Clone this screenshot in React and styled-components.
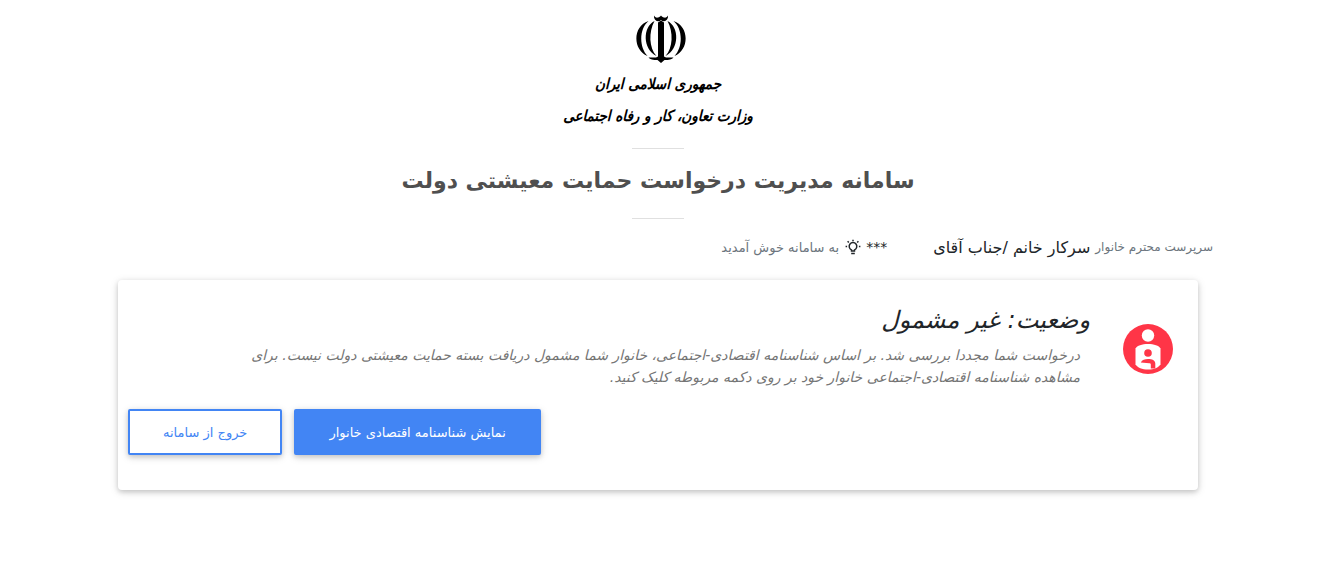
import React from "react";
import styled, { createGlobalStyle } from "styled-components";

const GlobalStyle = createGlobalStyle`
  * {
    box-sizing: border-box;
  }

  body {
    margin: 0;
    background: #fff;
    color: #212529;
    font-family: "DejaVu Sans", sans-serif;
    font-size: 12px;
  }
`;

const Page = styled.div`
  padding: 12px 23px 40px 0;
`;

const Container = styled.main`
  max-width: 1140px;
  margin: 0 auto;
  padding: 0 15px;
`;

const Header = styled.header`
  display: flex;
  flex-direction: column;
  align-items: center;
`;

const Emblem = styled.svg`
  display: block;
  width: 56px;
  height: 56px;
  margin-right: -6px;
`;

const LogoText = styled.div`
  color: #000;
  font-family: "DejaVu Sans Condensed", "DejaVu Sans", sans-serif;
  font-size: 15px;
  font-style: italic;
  font-weight: bold;
  line-height: 32px;
  white-space: nowrap;
`;

const Divider = styled.hr`
  width: 52px;
  margin: ${(props) => (props.$first ? "16px 0 0" : "0")};
  border: 0;
  border-top: 1px solid #e0e0e0;
`;

const Title = styled.h1`
  margin: 0;
  padding: 12px 0 17px;
  color: #4f4f4f;
  font-size: 22px;
  font-weight: bold;
  line-height: 40px;
  text-align: center;
`;

const Welcome = styled.div`
  display: flex;
  align-items: center;
  height: 28px;
  margin-top: 14px;
  color: #6c757d;
`;

const Name = styled.span`
  margin-right: 5px;
  color: #212529;
  font-size: 16px;
`;

const Stars = styled.span`
  margin-right: 46px;
  color: #212529;
  font-size: 14px;
`;

const Greeting = styled.span`
  font-size: 13px;
`;

const Bulb = styled.svg`
  width: 16px;
  height: 16px;
  margin: 0 5px 0 6px;
`;

const Card = styled.section`
  margin: 19px 15px 0;
  padding: 20px 10px 35px;
  border-radius: 4px;
  background: #fff;
  box-shadow: 0 2px 5px rgba(0, 0, 0, 0.16), 0 2px 10px rgba(0, 0, 0, 0.12);
`;

const Status = styled.div`
  display: flex;
  align-items: flex-start;
`;

const StatusIcon = styled.svg`
  flex: none;
  width: 50px;
  height: 50px;
  margin: 24px 15px 0 33px;
`;

const StatusBody = styled.div`
  font-style: italic;
`;

const StatusTitle = styled.h2`
  margin: 0;
  font-size: 24px;
  font-weight: normal;
  line-height: 40px;
`;

const StatusText = styled.p`
  max-width: 860px;
  margin: 4px 10px 0 0;
  color: #757575;
  font-size: 14px;
  line-height: 22px;
`;

const Actions = styled.div`
  display: flex;
  justify-content: flex-end;
  gap: 12px;
  margin-top: 21px;
`;

const Button = styled.button`
  height: 46px;
  padding: 0 33px;
  border: 2px solid #4285f4;
  border-radius: 2px;
  background: ${(props) => (props.$outline ? "#fff" : "#4285f4")};
  box-shadow: 0 2px 5px rgba(0, 0, 0, 0.16), 0 2px 10px rgba(0, 0, 0, 0.12);
  color: ${(props) => (props.$outline ? "#4285f4" : "#fff")};
  font-family: inherit;
  font-size: 13px;
  cursor: pointer;
`;

const EmblemIcon = () => (
  <Emblem viewBox="0 0 56 56" aria-hidden="true">
    <path d="M21 3.500c.5 1.500 2.500 2.500 4 2 1.300-.4 2.200-1 3-2 .8 1 1.700 1.600 3 2 1.500.5 3.500-.5 4-2 .3 3-1.500 5.500-4 5.700-1.200.1-2.200-.3-3-1.200-.8.900-1.800 1.300-3 1.200-2.500-.2-4.300-2.700-4-5.700z" />
    <path d="M25 10.500l3-2 3 2v34l2 1h7.500c-1.500 2-4.500 2.500-9 2.500L28 51l-3.500-3c-4.500 0-7.500-.5-9-2.500H23l2-1z" />
    <path d="M21.500 9C9.500 15 9.500 37 23.500 44 16 36 15.500 20 21.500 9z" />
    <path d="M34.500 9C46.500 15 46.500 37 32.500 44 40 36 40.500 20 34.500 9z" />
    <path d="M15.500 9C-.5 14 -.5 38 14.500 44 6 35 6 17 15.500 9z" />
    <path d="M40.500 9C56.500 14 56.500 38 41.500 44 50 35 50 17 40.500 9z" />
  </Emblem>
);

const BulbIcon = () => (
  <Bulb
    viewBox="0 0 16 16"
    fill="none"
    stroke="#212529"
    strokeWidth="1.500"
    aria-hidden="true"
  >
    <path d="M6.500 12v-1.100a3.800 3.800 0 1 1 3 0V12z" />
    <path d="M6.200 14.500h3.600M8 .8v1.500M.6 7.500h1.500M13.900 7.500h1.500M2.600 2.300l1.200 1.200M13.400 2.300l-1.200 1.200" />
  </Bulb>
);

const FamilyIcon = () => (
  <StatusIcon viewBox="0 0 50 50" aria-hidden="true">
    <circle cx="25" cy="25" r="25" fill="#ff3547" />
    <circle cx="25" cy="11.500" r="6.200" fill="#fff" />
    <path
      fill="#fff"
      d="M12.500 24.500C14 21.500 19 20 25 20s11 1.500 12.500 4.500v16C35.500 43.500 31 45.500 25 45.500s-10.500-2-12.500-5z"
    />
    <circle cx="25" cy="29" r="3.800" fill="#ff3547" />
    <path
      fill="#ff3547"
      d="M17.800 38.500C19 35.800 22 35 25 35c4 0 7.300 1.300 7.300 4.500v5h-4.500v-4c0-.9-.6-1.300-1.500-1.300z"
    />
  </StatusIcon>
);

const App = () => {
  return (
    <Page dir='rtl' lang='fa'>
      <GlobalStyle />
      <Container>
        <Header>
          <EmblemIcon />
          <LogoText>جمهوری اسلامی ایران</LogoText>
          <LogoText>وزارت تعاون، کار و رفاه اجتماعی</LogoText>
          <Divider $first />
          <Title>سامانه مدیریت درخواست حمایت معیشتی دولت</Title>
          <Divider />
        </Header>

        <Welcome>
          <span>سرپرست محترم خانوار</span>
          <Name>سرکار خانم /جناب آقای</Name>
          <Stars>***</Stars>
          <BulbIcon />
          <Greeting>به سامانه خوش آمدید</Greeting>
        </Welcome>

        <Card>
          <Status>
            <FamilyIcon />
            <StatusBody>
              <StatusTitle>وضعیت: غیر مشمول</StatusTitle>
              <StatusText>
                درخواست شما مجددا بررسی شد. بر اساس شناسنامه اقتصادی-اجتماعی،
                خانوار شما مشمول دریافت بسته حمایت معیشتی دولت نیست. برای
                مشاهده شناسنامه اقتصادی-اجتماعی خانوار خود بر روی دکمه مربوطه
                کلیک کنید.
              </StatusText>
            </StatusBody>
          </Status>
          <Actions>
            <Button type='button'>نمایش شناسنامه اقتصادی خانوار</Button>
            <Button type='button' $outline>
              خروج از سامانه
            </Button>
          </Actions>
        </Card>
      </Container>
    </Page>
  );
};

export default App;
